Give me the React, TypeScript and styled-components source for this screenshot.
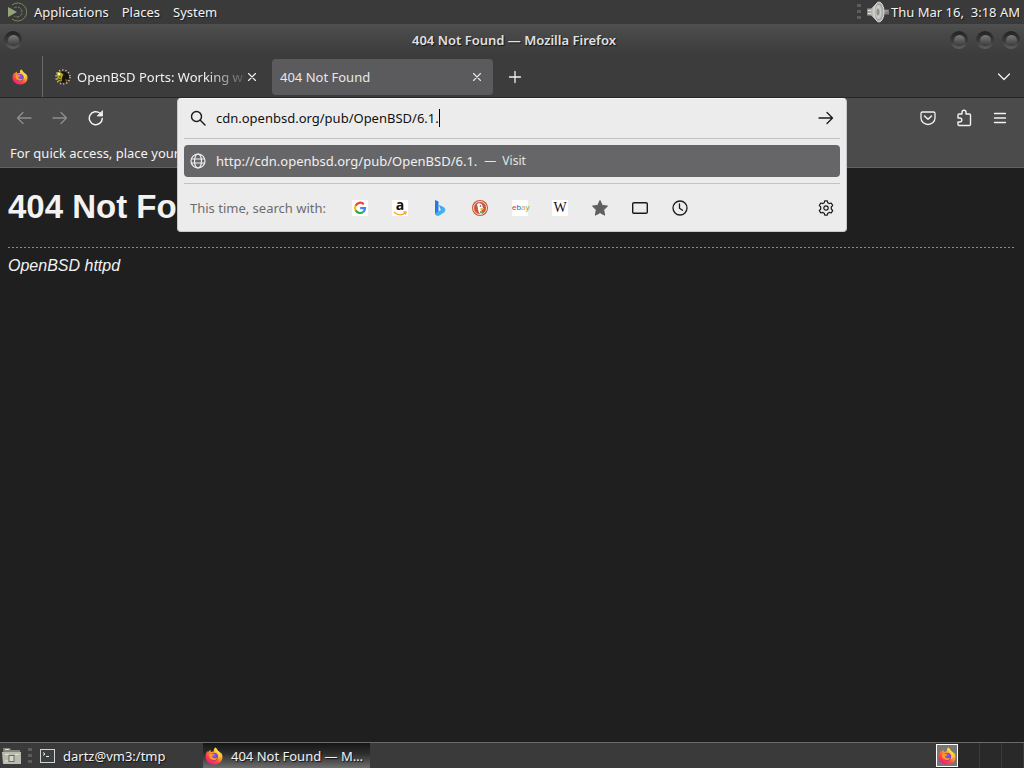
import React, { useState } from 'react';
import styled, { createGlobalStyle } from 'styled-components';

const GlobalStyle = createGlobalStyle`
  *, *::before, *::after { box-sizing: border-box; }
  body {
    margin: 0;
    background: #1f1f20;
    font-family: "Noto Sans", sans-serif;
    font-size: 13px;
    line-height: 18px;
    color: #f2f2f2;
  }
  button, input { font: inherit; color: inherit; }
  svg { display: block; flex: none; }
`;

const Desktop = styled.div`
  display: flex;
  flex-direction: column;
  min-height: 100vh;
`;

const Plain = styled.button`
  display: flex;
  align-items: center;
  border: 0;
  padding: 0;
  background: none;
  white-space: nowrap;
`;

/* Desktop panel */
const TopPanel = styled.header`
  display: flex;
  align-items: center;
  justify-content: space-between;
  height: 24px;
  padding: 0 4px 0 8px;
  background: #3a3a3b;
`;

const PanelMenu = styled.nav`
  display: flex;
  align-items: center;
  gap: 13px;
`;

const PanelButton = styled(Plain)`
  gap: 7px;
  height: 24px;
  text-shadow: 1px 1px 1px #1c1c1c;
`;

const PanelStatus = styled.div`
  display: flex;
  align-items: center;
`;

const VolumeButton = styled(Plain)`
  padding: 0 2px 0 6px;
`;

const Clock = styled.time`
  white-space: pre;
  text-shadow: 1px 1px 1px #1c1c1c;
`;

/* Window */
const BrowserWindow = styled.main`
  display: flex;
  flex: 1;
  flex-direction: column;
`;

const TitleBar = styled.div`
  display: grid;
  grid-template-columns: 100px 1fr 100px;
  align-items: center;
  height: 32px;
  padding: 0 4px;
  background: linear-gradient(#505051 0, #4b4b4c 5px, #3c3c3d 30px);
`;

const WindowTitle = styled.strong`
  padding-left: 4px;
  text-align: center;
  font-weight: 600;
  color: #e0e0e0;
  text-shadow: 1px 1px 1px #151515;
`;

const WindowButtons = styled.div<{ $end?: boolean }>`
  display: flex;
  gap: 8px;
  justify-content: ${(p) => (p.$end ? 'flex-end' : 'flex-start')};
`;

const Knob = styled.button`
  display: grid;
  place-items: center;
  width: 18px;
  height: 18px;
  padding: 0;
  border: 0;
  border-radius: 50%;
  background: linear-gradient(#222223, #3a3a3b 55%, #606061);
  &::before {
    content: "";
    width: 11px;
    height: 11px;
    border-radius: 50%;
    background: linear-gradient(#7a7a7b, #3a3a3b);
  }
`;

const TabStrip = styled.div`
  display: flex;
  align-items: center;
  height: 42px;
  padding-right: 2px;
  border-bottom: 1px solid #252526;
  background: #3c3c3d;
`;

const ViewButton = styled(Plain)`
  justify-content: center;
  width: 43px;
  height: 41px;
  padding-right: 2px;
  border-right: 1px solid #6b6b6c;
`;

const Tab = styled.div<{ $active?: boolean }>`
  display: flex;
  align-items: center;
  flex: 0 1 221px;
  min-width: 0;
  height: 36px;
  margin-left: 4px;
  padding: 0 8px;
  border-radius: 4px;
  background: ${(p) => (p.$active ? '#5b5b5d' : 'transparent')};
  color: ${(p) => (p.$active ? '#e8e8e8' : '#f2f2f2')};
`;

const TabLabel = styled(Plain)<{ $fade?: boolean }>`
  flex: 1;
  min-width: 0;
  gap: 6px;
  height: 36px;
  overflow: hidden;
  ${(p) => p.$fade && 'mask-image: linear-gradient(to right, #000 150px, transparent 196px);'}
`;

const TabClose = styled(Plain)`
  justify-content: center;
  width: 16px;
  height: 20px;
`;

const IconButton = styled(Plain)<{ $dim?: boolean }>`
  justify-content: center;
  width: 36px;
  height: 36px;
  flex: none;
  opacity: ${(p) => (p.$dim ? 0.4 : 1)};
`;

const NewTabButton = styled(IconButton)`
  margin-left: 4px;
`;

const Spacer = styled.div`
  flex: 1;
`;

const NavBar = styled.div`
  display: flex;
  align-items: center;
  height: 41px;
  padding: 0 6px 2px;
  background: #4b4b4c;
`;

const NavGroup = styled.div<{ $end?: boolean }>`
  display: flex;
  flex: 0 0 171px;
  justify-content: ${(p) => (p.$end ? 'flex-end' : 'flex-start')};
`;

const UrlSlot = styled.div`
  position: relative;
  align-self: stretch;
  flex: 1;
  min-width: 0;
`;

const UrlPopup = styled.div`
  position: absolute;
  z-index: 2;
  inset: 0 0 auto;
  padding: 0 6px;
  border: 1px solid #c9c9ca;
  border-top-color: #f8f8f8;
  border-radius: 4px;
  background: #ececec;
  color: #1a1a1b;
`;

const UrlRow = styled.form`
  display: flex;
  align-items: center;
  height: 40px;
  padding: 0 0 2px 6px;
  border-bottom: 1px solid #c2c2c3;
`;

const UrlInput = styled.input`
  field-sizing: content;
  margin-left: 10px;
  padding: 0;
  border: 0;
  outline: 0;
  background: none;
  color: #111;
`;

const Caret = styled.span`
  width: 1px;
  height: 18px;
  background: #000;
`;

const GoButton = styled(IconButton)`
  width: 28px;
  margin-left: auto;
`;

const Suggestion = styled.a`
  display: flex;
  align-items: center;
  gap: 10px;
  height: 32px;
  margin: 6px 0;
  padding: 0 6px;
  border-radius: 4px;
  background: #666668;
  color: #f0f0f0;
  text-decoration: none;
  white-space: nowrap;
`;

const SuggestionAction = styled.span`
  display: flex;
  gap: 6px;
  margin-left: -3px;
  font-size: 12px;
  color: #e4e4e4;
`;

const EngineRow = styled.div`
  display: flex;
  align-items: center;
  height: 48px;
  border-top: 1px solid #c2c2c3;
`;

const EngineLabel = styled.span`
  padding: 0 14px 0 6px;
  color: #6c6c6d;
  white-space: nowrap;
`;

const EngineButton = styled(Plain)`
  justify-content: center;
  width: 40px;
  height: 32px;
`;

const SettingsButton = styled(EngineButton)`
  width: 28px;
  margin-left: auto;
`;

const BookmarksBar = styled.div`
  height: 29px;
  padding: 5px 10px;
  border-bottom: 1px solid #626263;
  background: #4b4b4c;
  white-space: nowrap;
`;

const Page = styled.article`
  flex: 1;
  padding: 20px 8px;
  background: #1f1f20;
  font-family: "Liberation Sans", Arial, sans-serif;
  font-size: 16px;
`;

const PageHeading = styled.h1`
  margin: 0;
  font-size: 33px;
  line-height: 38px;
`;

const Rule = styled.hr`
  height: 1px;
  margin: 21px 0 8px;
  border: 0;
  background: repeating-linear-gradient(to right, #8a8a8a 0 2px, transparent 2px 4px);
`;

const Server = styled.address`
  line-height: 20px;
`;

/* Task list */
const BottomPanel = styled.footer`
  display: flex;
  align-items: stretch;
  height: 26px;
  border-top: 1px solid #6a6a6b;
  background: #3a3a3b;
`;

const DesktopButton = styled(Plain)`
  width: 38px;
  gap: 6px;
  padding-left: 2px;
`;

const Task = styled(Plain)<{ $active?: boolean }>`
  flex: 0 1 167px;
  gap: 8px;
  margin-right: ${(p) => (p.$active ? 'auto' : '-2px')};
  padding: 0 2px;
  text-shadow: 1px 1px 1px #111;
  ${(p) => p.$active && 'background: linear-gradient(#151516, #2f2f30 45%, #6e6e6f);'}
`;

const Workspaces = styled.div`
  display: grid;
  grid-template-columns: repeat(4, 22px);
  background: #29292a;
`;

const Workspace = styled.button<{ $current?: boolean }>`
  display: grid;
  place-items: center;
  padding: 0;
  border: 0;
  border-right: 1px solid #3b3b3c;
  background: none;
  ${(p) => p.$current && 'margin: 1px 0; border: 1px solid #fff; background: #777778;'}
`;

const line = {
  fill: 'none',
  stroke: 'currentColor',
  strokeLinecap: 'round' as const,
  strokeLinejoin: 'round' as const,
};

function Firefox({ id, size = 16 }: { id: string; size?: number }) {
  return (
    <svg width={size} height={size} viewBox="0 0 32 32" aria-hidden="true">
      <defs>
        <linearGradient id={`${id}-flame`} x1="0.85" y1="0.05" x2="0.2" y2="0.95">
          <stop offset="0" stopColor="#fff44f" />
          <stop offset="0.35" stopColor="#ffb02e" />
          <stop offset="0.65" stopColor="#ff4f3d" />
          <stop offset="1" stopColor="#f5147e" />
        </linearGradient>
        <radialGradient id={`${id}-globe`} cx="0.5" cy="0.35" r="0.7">
          <stop offset="0" stopColor="#a05cff" />
          <stop offset="1" stopColor="#4b2db5" />
        </radialGradient>
      </defs>
      <path
        fill={`url(#${id}-flame)`}
        d="M18 1c3 2 4 4 5 6 3 1 5 3 6 5 0-1 0-2-1-3 3 4 4 9 2 14-2 5-7 8-14 8C7 31 1 25 1 17c0-4 1-7 4-10v3c1-2 3-4 5-5-1 2 0 3 1 4 2-1 4-1 5-1-1-2 0-5 2-7z"
      />
      <circle cx="16" cy="17" r="7" fill={`url(#${id}-globe)`} />
      <path fill="#ff9a25" d="M7 13c2-2 4-2 6-1 2 0 3 1 3 2-1 1-3 1-3 2-1 2 1 4 4 4 2 0 3-1 5-1-1 3-4 5-8 4-5-1-8-5-7-10z" />
      <path fill="#ffd83d" d="M18 1c-1 4 1 6 4 9 3 3 3 8 1 12 6-5 5-12 0-15-1-2-2-4-5-6z" />
    </svg>
  );
}

const MateLogo = () => (
  <svg width="19" height="20" viewBox="0 0 19 20" aria-hidden="true">
    <path d="M0 5 9 10 0 15z" fill="#96a37b" />
    <g fill="none" stroke="#77865d">
      <path d="M4 3a9 9 0 1 1 0 14" />
      <path d="M6 6a5 5 0 1 1 0 8" strokeDasharray="3 1" />
    </g>
  </svg>
);

const Grip = () => (
  <svg width="4" height="16" viewBox="0 0 4 16" fill="#5d5d5e" aria-hidden="true">
    <path d="M0 0h4v3H0zM0 6h4v3H0zM0 12h4v3H0z" />
  </svg>
);

const Speaker = () => (
  <svg width="22" height="22" viewBox="0 0 22 22" aria-hidden="true">
    <defs>
      <linearGradient id="cone" x1="0" y1="0" x2="1" y2="0">
        <stop offset="0" stopColor="#8c8c8a" />
        <stop offset="1" stopColor="#e2e2de" />
      </linearGradient>
    </defs>
    <path d="M15 8.500h7v5h-7z" fill="#7d7d7b" />
    <path d="M17 10h4" stroke="#a5a5a2" />
    <path d="M0 7.500h4L10 2v18l-6-5.500H0z" fill="url(#cone)" />
    <ellipse cx="12" cy="11" rx="5" ry="10" fill="#a9a9a6" stroke="#dcdcd8" />
    <ellipse cx="11.500" cy="11" rx="3" ry="7" fill="#c9c9c5" />
    <ellipse cx="11" cy="11" rx="1.500" ry="3.500" fill="#8f8f8c" />
    <path d="M1 9.500h3M1 12.500h3" stroke="#e4e4e1" />
  </svg>
);

const Puffy = () => (
  <svg width="16" height="16" viewBox="0 0 16 16" aria-hidden="true">
    <circle cx="8" cy="8" r="7" fill="none" stroke="#d9c9a6" strokeWidth="1.5" strokeDasharray="1.2 2" />
    <circle cx="8.500" cy="8" r="5.500" fill="#17150d" />
    <path d="M1 4c2-2 5-1 7 1 0 3-2 4-1 7-2 1-4 0-5-2 1-2 0-4-1-6z" fill="#b8ab22" />
    <circle cx="4" cy="5" r="1.200" fill="#fff7aa" />
    <path d="M4 8h2M3 10l3 1M8 4l1 3" stroke="#37310c" />
    <path d="m10 10 3 1-2 2z" fill="#8c5c20" />
  </svg>
);

const Close = () => (
  <svg width="10" height="10" viewBox="0 0 10 10" {...line} strokeWidth="1.1" aria-hidden="true">
    <path d="m1.500 1.500 7 7m0-7-7 7" />
  </svg>
);

const Plus = () => (
  <svg width="14" height="14" viewBox="0 0 14 14" {...line} strokeWidth="1.300" aria-hidden="true">
    <path d="M7 1.500v11M1.500 7h11" />
  </svg>
);

const ChevronDown = () => (
  <svg width="14" height="14" viewBox="0 0 14 14" {...line} strokeWidth="1.300" aria-hidden="true">
    <path d="m1.500 4 5.500 5.500L12.500 4" />
  </svg>
);

const Arrow = ({ back }: { back?: boolean }) => (
  <svg width="16" height="16" viewBox="0 0 16 16" {...line} strokeWidth="1.300" aria-hidden="true">
    <path d={back ? 'M15 8H1.500M7 2.500 1.500 8 7 13.500' : 'M1 8h13.500M9 2.500 14.500 8 9 13.500'} />
  </svg>
);

const Reload = () => (
  <svg width="16" height="16" viewBox="0 0 16 16" {...line} strokeWidth="1.500" aria-hidden="true">
    <path d="M14.300 8.500A6.500 6.500 0 1 1 12 3.200" />
    <path d="M14.500 1v5h-5z" fill="currentColor" strokeWidth="0.800" />
  </svg>
);

const Pocket = () => (
  <svg width="16" height="16" viewBox="0 0 16 16" {...line} strokeWidth="1.300" aria-hidden="true">
    <path d="M2.500 2h11a1.500 1.500 0 0 1 1.500 1.500V8A7 6.500 0 0 1 1 8V3.500A1.500 1.500 0 0 1 2.500 2z" />
    <path d="M4.500 6 8 9.300 11.500 6" strokeWidth="1.500" />
  </svg>
);

const Extensions = () => (
  <svg width="16" height="18" viewBox="0 0 16 18" {...line} strokeWidth="1.400" aria-hidden="true">
    <path d="M2 9V6.200A1.200 1.200 0 0 1 3.200 5H6V3.200a2 2 0 0 1 4 0V5h3.300A1.200 1.200 0 0 1 14.500 6.200v9.100a1.200 1.200 0 0 1-1.200 1.200H3.200A1.200 1.200 0 0 1 2 15.300V13h1.800a2 2 0 0 0 0-4z" />
  </svg>
);

const Menu = () => (
  <svg width="14" height="14" viewBox="0 0 14 14" {...line} strokeWidth="1.300" aria-hidden="true">
    <path d="M1.500 2.500h11M1.500 7h11M1.500 11.500h11" />
  </svg>
);

const Search = () => (
  <svg width="16" height="16" viewBox="0 0 16 16" {...line} strokeWidth="1.400" aria-hidden="true">
    <circle cx="6.500" cy="6.500" r="5" />
    <path d="m10.300 10.300 4.700 4.700" />
  </svg>
);

const Globe = () => (
  <svg width="16" height="16" viewBox="0 0 16 16" {...line} strokeWidth="1.200" aria-hidden="true">
    <circle cx="8" cy="8" r="7" />
    <ellipse cx="8" cy="8" rx="3.500" ry="7" />
    <path d="M1.500 6h13M1.500 10h13" />
  </svg>
);

const Google = () => (
  <svg width="16" height="16" viewBox="0 0 16 16" aria-hidden="true">
    <path fill="#fff" d="M0 0h16v16H0z" />
    <g fill="none" strokeWidth="2.200">
      <path stroke="#ea4335" d="M11.800 4.300A5 5 0 0 0 3.600 5.700" />
      <path stroke="#fbbc05" d="M3.600 5.700a5 5 0 0 0 0 4.600" />
      <path stroke="#34a853" d="M3.600 10.300a5 5 0 0 0 7.700 1.500" />
      <path stroke="#4285f4" d="M11.300 11.800A5 5 0 0 0 13 8.200H8.200" />
    </g>
  </svg>
);

const BrandTile = styled.span<{ $serif?: boolean; $small?: boolean }>`
  display: grid;
  place-items: center;
  width: 16px;
  height: 16px;
  background: #fff;
  color: #111;
  font-family: ${(p) => (p.$serif ? '"Liberation Serif", serif' : '"Liberation Sans", sans-serif')};
  font-size: ${(p) => (p.$small ? '8px' : '14px')};
  line-height: 16px;
`;

const AmazonTile = styled(BrandTile)`
  grid-template-rows: 11px 5px;
  font-family: "Open Sans", sans-serif;
  font-weight: 700;
  line-height: 10px;
`;

const Ink = styled.span<{ $color: string }>`
  color: ${(p) => p.$color};
`;

const Amazon = () => (
  <AmazonTile>
    a
    <svg width="14" height="5" viewBox="0 0 14 5" fill="none" stroke="#f6a623" strokeWidth="1.300" aria-hidden="true">
      <path d="M1 1c4 3.500 8 3.500 11 1M10.500 1h2.500l-.500 2.500" />
    </svg>
  </AmazonTile>
);

const Bing = () => (
  <svg width="16" height="16" viewBox="0 0 16 16" aria-hidden="true">
    <defs>
      <linearGradient id="bing-body" x1="0" y1="0" x2="1" y2="1">
        <stop offset="0" stopColor="#2f8df0" />
        <stop offset="1" stopColor="#4dc8f0" />
      </linearGradient>
    </defs>
    <path fill="#2878e4" d="m3 0 3.500 1.500v10L3 14z" />
    <path fill="url(#bing-body)" d="m7 5 4.500 2c2 1 2.500 3.500 1 5.200L6.500 16C4.500 16 3 15 3 13.500l6-3.500L8 8z" />
  </svg>
);

const Duck = () => (
  <svg width="16" height="16" viewBox="0 0 16 16" aria-hidden="true">
    <circle cx="8" cy="8" r="8" fill="#c9563c" />
    <circle cx="8" cy="8" r="6.500" fill="none" stroke="#f6dfd8" />
    <path fill="#fff" d="M5 4c2-1.500 5-1 5.500 2l.500 3-1.500 1 .5 4C7 14 6.500 12 6 9z" />
    <path fill="#f4b12e" d="m8.500 8 4 .200-1.500 1.600H8.500z" />
    <circle cx="8.500" cy="6" r=".8" fill="#394b61" />
    <path fill="#66a850" d="m8 11 3 1v1.500L8 13z" />
  </svg>
);

const Ebay = () => (
  <BrandTile $small>
    <span>
      <Ink $color="#d9363e">e</Ink>
      <Ink $color="#2b62b8">b</Ink>
      <Ink $color="#e3a81b">a</Ink>
      <Ink $color="#7cab2b">y</Ink>
    </span>
  </BrandTile>
);

const Star = () => (
  <svg width="18" height="18" viewBox="0 0 18 18" aria-hidden="true">
    <path
      fill="#5e5e5f"
      stroke="#5e5e5f"
      strokeLinejoin="round"
      d="m9 1.500 2.300 4.900 5.200.700-3.800 3.700.900 5.400L9 13.600l-4.600 2.600.900-5.400L1.500 7.100l5.200-.700z"
    />
  </svg>
);

const TabsIcon = () => (
  <svg width="16" height="14" viewBox="0 0 16 14" {...line} strokeWidth="1.400" aria-hidden="true">
    <rect x="0.700" y="1.700" width="14.600" height="10.600" rx="1.300" />
  </svg>
);

const History = () => (
  <svg width="16" height="16" viewBox="0 0 16 16" {...line} strokeWidth="1.300" aria-hidden="true">
    <circle cx="8" cy="8" r="7" />
    <path d="M7.500 4v4.300l3 2" />
  </svg>
);

const Gear = () => (
  <svg width="16" height="16" viewBox="0 0 16 16" {...line} strokeWidth="1.200" aria-hidden="true">
    <circle cx="8" cy="8" r="2.200" />
    <path d="M6.700.8h2.600l.500 2 1.400.800 2-.600 1.500 2.300L13.300 7v2l1.400 1.700-1.500 2.300-2-.600-1.400.800-.500 2H6.700l-.500-2-1.400-.800-2 .600-1.500-2.300L2.700 9V7L1.300 5.300 2.800 3l2 .600 1.400-.800z" />
  </svg>
);

const Folder = () => (
  <svg width="20" height="18" viewBox="0 0 20 18" aria-hidden="true">
    <path d="M1 1h7l1 2h9v14H2z" fill="#85867b" />
    <path d="M0 5h19v12H1z" fill="#b9bbae" />
    <path d="M3 2.500h4M3 7.500h4M13 7.500h4M3 14h3" stroke="#e1e3d6" />
    <rect x="7" y="8.500" width="5" height="6" fill="#d5d7ca" stroke="#6b6c63" />
  </svg>
);

const Terminal = () => (
  <svg width="15" height="14" viewBox="0 0 15 14" aria-hidden="true">
    <rect x="0.500" y="0.500" width="14" height="13" fill="#3b4143" stroke="#d2d2d3" />
    <path d="m3 3.500 2 1.500-2 1.500M6 7.500h3" fill="none" stroke="#eee" />
  </svg>
);

const engines = [
  { name: 'Google', icon: <Google /> },
  { name: 'Amazon', icon: <Amazon /> },
  { name: 'Bing', icon: <Bing /> },
  { name: 'DuckDuckGo', icon: <Duck /> },
  { name: 'eBay', icon: <Ebay /> },
  { name: 'Wikipedia', icon: <BrandTile $serif>W</BrandTile> },
  { name: 'Bookmarks', icon: <Star /> },
  { name: 'Tabs', icon: <TabsIcon /> },
  { name: 'History', icon: <History /> },
];

export default function App() {
  const [url, setUrl] = useState('cdn.openbsd.org/pub/OpenBSD/6.1.');

  return (
    <Desktop>
      <GlobalStyle />
      <TopPanel>
        <PanelMenu aria-label="Desktop">
          <PanelButton><MateLogo />Applications</PanelButton>
          <PanelButton>Places</PanelButton>
          <PanelButton>System</PanelButton>
        </PanelMenu>
        <PanelStatus>
          <Grip />
          <VolumeButton aria-label="Volume"><Speaker /></VolumeButton>
          <Clock>Thu Mar 16,  3:18 AM</Clock>
        </PanelStatus>
      </TopPanel>

      <BrowserWindow>
        <TitleBar>
          <WindowButtons><Knob aria-label="Window menu" /></WindowButtons>
          <WindowTitle>404 Not Found — Mozilla Firefox</WindowTitle>
          <WindowButtons $end>
            <Knob aria-label="Minimize" />
            <Knob aria-label="Maximize" />
            <Knob aria-label="Close window" />
          </WindowButtons>
        </TitleBar>

        <TabStrip>
          <ViewButton aria-label="Firefox View"><Firefox id="view" /></ViewButton>
          <Tab>
            <TabLabel $fade><Puffy />OpenBSD Ports: Working with</TabLabel>
            <TabClose aria-label="Close tab"><Close /></TabClose>
          </Tab>
          <Tab $active>
            <TabLabel>404 Not Found</TabLabel>
            <TabClose aria-label="Close tab"><Close /></TabClose>
          </Tab>
          <NewTabButton aria-label="New tab"><Plus /></NewTabButton>
          <Spacer />
          <IconButton aria-label="List all tabs"><ChevronDown /></IconButton>
        </TabStrip>

        <NavBar>
          <NavGroup>
            <IconButton $dim aria-label="Back"><Arrow back /></IconButton>
            <IconButton $dim aria-label="Forward"><Arrow /></IconButton>
            <IconButton aria-label="Reload"><Reload /></IconButton>
          </NavGroup>
          <UrlSlot>
            <UrlPopup>
              <UrlRow onSubmit={(e) => e.preventDefault()}>
                <Search />
                <UrlInput
                  aria-label="Search or enter address"
                  spellCheck={false}
                  value={url}
                  onChange={(e) => setUrl(e.target.value)}
                />
                <Caret />
                <GoButton type="submit" aria-label="Go"><Arrow /></GoButton>
              </UrlRow>
              <Suggestion href="#visit">
                <Globe />
                <span>http://cdn.openbsd.org/pub/OpenBSD/6.1.</span>
                <SuggestionAction><span>—</span><span>Visit</span></SuggestionAction>
              </Suggestion>
              <EngineRow>
                <EngineLabel>This time, search with:</EngineLabel>
                {engines.map((engine) => (
                  <EngineButton key={engine.name} aria-label={engine.name}>{engine.icon}</EngineButton>
                ))}
                <SettingsButton aria-label="Search settings"><Gear /></SettingsButton>
              </EngineRow>
            </UrlPopup>
          </UrlSlot>
          <NavGroup $end>
            <IconButton aria-label="Save to Pocket"><Pocket /></IconButton>
            <IconButton aria-label="Extensions"><Extensions /></IconButton>
            <IconButton aria-label="Application menu"><Menu /></IconButton>
          </NavGroup>
        </NavBar>
        <BookmarksBar>For quick access, place your</BookmarksBar>

        <Page>
          <PageHeading>404 Not Found</PageHeading>
          <Rule />
          <Server>OpenBSD httpd</Server>
        </Page>
      </BrowserWindow>

      <BottomPanel>
        <DesktopButton aria-label="Show desktop"><Folder /><Grip /></DesktopButton>
        <Task><Terminal />dartz@vm3:/tmp</Task>
        <Task $active><Firefox id="task" size={18} />404 Not Found — M…</Task>
        <Workspaces>
          <Workspace $current aria-label="Workspace 1"><Firefox id="space" size={18} /></Workspace>
          <Workspace aria-label="Workspace 2" />
          <Workspace aria-label="Workspace 3" />
          <Workspace aria-label="Workspace 4" />
        </Workspaces>
      </BottomPanel>
    </Desktop>
  );
}
